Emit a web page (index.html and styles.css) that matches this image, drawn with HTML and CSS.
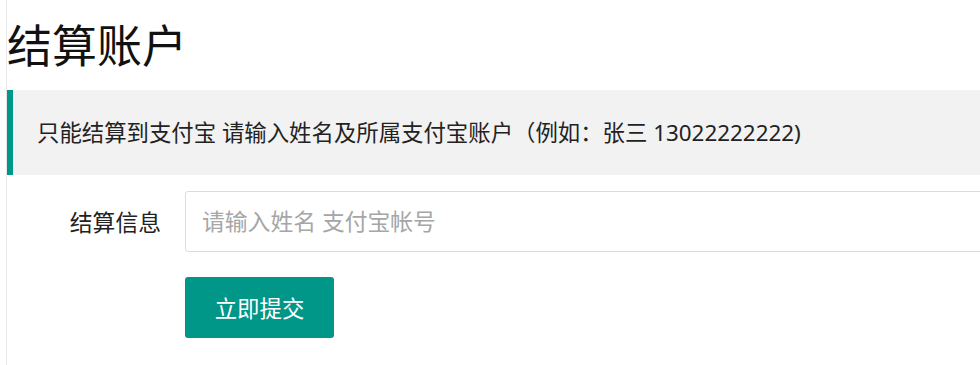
FILE: index.html
```html
<!DOCTYPE html>
<html lang="zh-CN">
<head>
	<meta charset="UTF-8">
	<title>结算账户</title>
	<link rel="stylesheet" href="styles.css">
</head>
<body>
	<div class="page">
		<h2 class="title">结算账户</h2>

		<blockquote class="quote">
			只能结算到支付宝 请输入姓名及所属支付宝账户（例如：张三 13022222222)
		</blockquote>

		<form class="form" onsubmit="return false;">
			<div class="form-item">
				<label class="form-label">结算信息</label>
				<div class="form-block">
					<input type="text" class="input" placeholder="请输入姓名 支付宝帐号">
				</div>
			</div>
			<div class="form-item form-btns">
				<button class="btn">立即提交</button>
			</div>
		</form>
	</div>
</body>
</html>
```

FILE: styles.css
```css
*{
	margin: 0;
	padding: 0;
	box-sizing: border-box;
}
html, body{
	overflow: hidden;
}
body{
	font-family: "Noto Sans", "Noto Sans CJK SC", sans-serif;
	color: #333;
	background: #fff;
}
.page{
	margin-left: 6px;
	width: 1200px;
	height: 365px;
	padding-top: 23px;
	border-left: 1px solid #e6e6e6;
}
.title{
	font-size: 45px;
	line-height: 45px;
	font-weight: 400;
	color: #111;
	margin-bottom: 22px;
}
.quote{
	padding: 24px 24px;
	font-size: 22.4px;
	line-height: 37px;
	color: #222;
	background: #f2f2f2;
	border-left: 6px solid #009688;
	margin-bottom: 16px;
}
.form-item{
	display: flex;
	align-items: center;
}
.form-label{
	width: 178px;
	padding-right: 24px;
	text-align: right;
	font-size: 22.8px;
	color: #222;
}
.form-block{
	flex: 1;
}
.input{
	display: block;
	width: 100%;
	height: 61px;
	padding-left: 16px;
	border: 1px solid #dcdcdc;
	border-radius: 3px;
	font-family: inherit;
	font-size: 22.8px;
	color: #333;
	outline: none;
}
.input::placeholder{
	color: #a6a6a6;
}
.form-btns{
	margin-top: 25px;
	padding-left: 178px;
}
.btn{
	width: 149px;
	height: 61px;
	border: none;
	border-radius: 3px;
	background: #009688;
	color: #fff;
	font-family: inherit;
	font-size: 22.4px;
	cursor: pointer;
}
.btn:hover{
	opacity: .8;
}
```
